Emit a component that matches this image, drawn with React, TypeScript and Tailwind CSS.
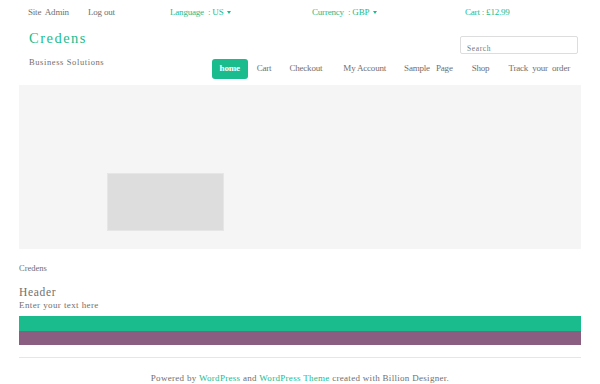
import React from "react";

export default function App() {
  const serif = { fontFamily: '"Liberation Serif", "Times New Roman", serif' };
  return (
    <div className="w-[600px] h-[384px] bg-white overflow-hidden text-[#6f6f6f]" style={serif}>
      {/* top bar */}
      <div className="h-[25px] flex items-center text-[9px] tracking-[-0.2px]">
        <span className="ml-[28px] w-[60px] whitespace-pre">Site  Admin</span>
        <span className="w-[82px]">Log out</span>
        <span className="w-[142px] text-[#1abc8e] whitespace-pre flex items-center">
          Language  : US
          <span className="ml-[4px] inline-block w-0 h-0 border-l-[2.5px] border-r-[2.5px] border-t-[3px] border-l-transparent border-r-transparent border-t-[#1abc8e]" />
        </span>
        <span className="w-[153px] text-[#1abc8e] whitespace-pre flex items-center">
          Currency  : GBP
          <span className="ml-[4px] inline-block w-0 h-0 border-l-[2.5px] border-r-[2.5px] border-t-[3px] border-l-transparent border-r-transparent border-t-[#1abc8e]" />
        </span>
        <span className="text-[#1abc8e]">Cart : £12.99</span>
      </div>
      {/* header */}
      <div className="h-[60px] mx-[19px] flex justify-between">
        <div className="pl-[10px]">
          <div className="text-[14.5px] tracking-[1.5px] text-[#1abc8e] leading-none mt-[6px]">Credens</div>
          <div className="text-[8.5px] tracking-[0.6px] mt-[12px] leading-none">Business Solutions</div>
        </div>
        <div className="flex flex-col items-end">
          <div className="mt-[11px] mr-[3px] w-[118px] h-[18px] border border-[#ddd] rounded-[2px] flex items-end pl-[6px] pb-[1px] text-[7.5px] leading-none tracking-[0.6px] text-[#777]">
            Search
          </div>
          <div className="mt-[5px] flex items-center text-[9px] tracking-[-0.2px] h-[20px] pr-[11px]">
            <span className="bg-[#1abc8e] text-white rounded-[3px] h-[20px] w-[36px] flex items-center justify-center font-bold">home</span>
            <span className="ml-[9px]">Cart</span>
            <span className="ml-[18px]">Checkout</span>
            <span className="ml-[21px]">My Account</span>
            <span className="ml-[18px] whitespace-pre">Sample   Page</span>
            <span className="ml-[19px]">Shop</span>
            <span className="ml-[19px] whitespace-pre">Track  your  order</span>
          </div>
        </div>
      </div>
      {/* hero */}
      <div className="mx-[19px] h-[164px] bg-[#f5f5f5] pt-[88px] pl-[88px]">
        <div className="w-[117px] h-[58px] bg-[#dddddd] border border-[#e6e6e6]" />
      </div>
      <div className="mx-[19px] mt-[15px] text-[8.5px] leading-none">Credens</div>
      <div className="mx-[19px] mt-[14px] text-[11.5px] tracking-[0.7px] leading-none">Header</div>
      <div className="mx-[19px] mt-[3px] text-[9px] tracking-[0.4px] leading-none">Enter your text here</div>
      <div className="mx-[19px] mt-[6px] h-[15px] bg-[#1abc8e]" />
      <div className="mx-[19px] h-[14px] bg-[#8a5e80]" />
      <div className="mx-[19px] mt-[12px] h-[1px] bg-[#e6e6e6]" />
      <div className="mt-[16px] text-center text-[9px] tracking-[0.3px] leading-none">
        Powered by <span className="text-[#1abc8e]">WordPress</span> and{" "}
        <span className="text-[#1abc8e]">WordPress Theme</span> created with Billion Designer.
      </div>
    </div>
  );
}
